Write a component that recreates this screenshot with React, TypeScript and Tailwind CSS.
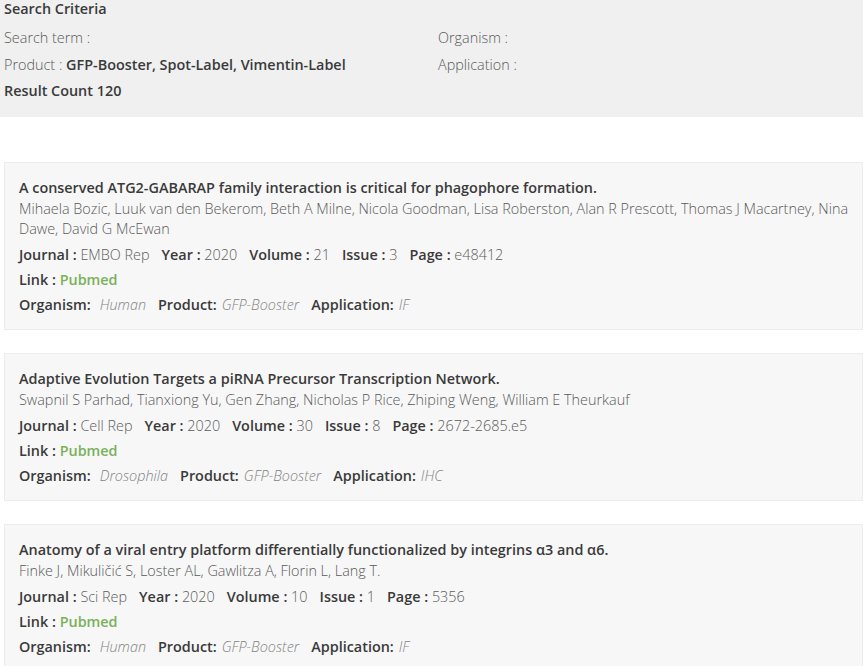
import React from "react";

type Pub = {
  title: string;
  authors: string;
  journal: string;
  year: string;
  volume: string;
  issue: string;
  page: string;
  organism: string;
  product: string;
  application: string;
};

const pubs: Pub[] = [
  {
    title: "A conserved ATG2-GABARAP family interaction is critical for phagophore formation.",
    authors:
      "Mihaela Bozic, Luuk van den Bekerom, Beth A Milne, Nicola Goodman, Lisa Roberston, Alan R Prescott, Thomas J Macartney, Nina Dawe, David G McEwan",
    journal: "EMBO Rep",
    year: "2020",
    volume: "21",
    issue: "3",
    page: "e48412",
    organism: "Human",
    product: "GFP-Booster",
    application: "IF",
  },
  {
    title: "Adaptive Evolution Targets a piRNA Precursor Transcription Network.",
    authors:
      "Swapnil S Parhad, Tianxiong Yu, Gen Zhang, Nicholas P Rice, Zhiping Weng, William E Theurkauf",
    journal: "Cell Rep",
    year: "2020",
    volume: "30",
    issue: "8",
    page: "2672-2685.e5",
    organism: "Drosophila",
    product: "GFP-Booster",
    application: "IHC",
  },
  {
    title: "Anatomy of a viral entry platform differentially functionalized by integrins α3 and α6.",
    authors: "Finke J, Mikuličić S, Loster AL, Gawlitza A, Florin L, Lang T.",
    journal: "Sci Rep",
    year: "2020",
    volume: "10",
    issue: "1",
    page: "5356",
    organism: "Human",
    product: "GFP-Booster",
    application: "IF",
  },
];

function Card({ p }: { p: Pub }) {
  return (
    <div className="bg-[#f7f7f7] border border-[#ececec] pl-[14px] pr-3 pt-[14px] pb-[12px]">
      <div className="text-[14.4px] leading-[21px] font-semibold text-[#3a3a3a]">{p.title}</div>
      <div className="text-[14.4px] leading-[20px] font-light text-[#595959] mt-[1px]">{p.authors}</div>
      <div className="text-[14.4px] leading-[25px] mt-[3px] flex gap-[12px] text-[#3a3a3a]">
        <span>
          <span className="font-semibold">Journal : </span>
          <span className="font-light text-[#5c5c5c]">{p.journal}</span>
        </span>
        <span>
          <span className="font-semibold">Year : </span>
          <span className="font-light text-[#5c5c5c]">{p.year}</span>
        </span>
        <span>
          <span className="font-semibold">Volume : </span>
          <span className="font-light text-[#5c5c5c]">{p.volume}</span>
        </span>
        <span>
          <span className="font-semibold">Issue : </span>
          <span className="font-light text-[#5c5c5c]">{p.issue}</span>
        </span>
        <span>
          <span className="font-semibold">Page : </span>
          <span className="font-light text-[#5c5c5c]">{p.page}</span>
        </span>
      </div>
      <div className="text-[14.4px] leading-[25px] text-[#3a3a3a]">
        <span className="font-semibold">Link : </span>
        <span className="font-semibold text-[#7ab15a]">Pubmed</span>
      </div>
      <div className="text-[14.4px] leading-[25px] text-[#3a3a3a] flex gap-[12px]">
        <span>
          <span className="font-semibold">Organism:</span>
          <span className="font-light italic text-[#838383] ml-[9px]">{p.organism}</span>
        </span>
        <span>
          <span className="font-semibold">Product:</span>
          <span className="font-light italic text-[#838383] ml-[5px]">{p.product}</span>
        </span>
        <span>
          <span className="font-semibold">Application:</span>
          <span className="font-light italic text-[#838383] ml-[5px]">{p.application}</span>
        </span>
      </div>
    </div>
  );
}

export default function App() {
  return (
    <div
      className="w-[863px] min-h-[666px] bg-white overflow-hidden"
      style={{ fontFamily: '"Open Sans", "Liberation Sans", sans-serif' }}
    >
      <div className="bg-[#f0f0f0] pl-[4px] pb-[13px] text-[14.4px] text-[#3a3a3a]">
        <div className="font-semibold leading-[17px]">Search Criteria</div>
        <div className="grid grid-cols-[434px_1fr] mt-[7px]">
          <div className="leading-[27px] font-light text-[#595959]">Search term :</div>
          <div className="leading-[27px] font-light text-[#595959]">Organism :</div>
          <div className="leading-[27px]">
            <span className="font-light text-[#595959]">Product : </span>
            <span className="font-semibold">GFP-Booster, Spot-Label, Vimentin-Label</span>
          </div>
          <div className="leading-[27px] font-light text-[#595959]">Application :</div>
          <div className="leading-[26px] font-semibold">Result Count 120</div>
        </div>
      </div>
      <div className="pl-[4px] pt-[45px] flex flex-col gap-[23px]">
        {pubs.map((p, i) => (
          <Card key={i} p={p} />
        ))}
      </div>
    </div>
  );
}
